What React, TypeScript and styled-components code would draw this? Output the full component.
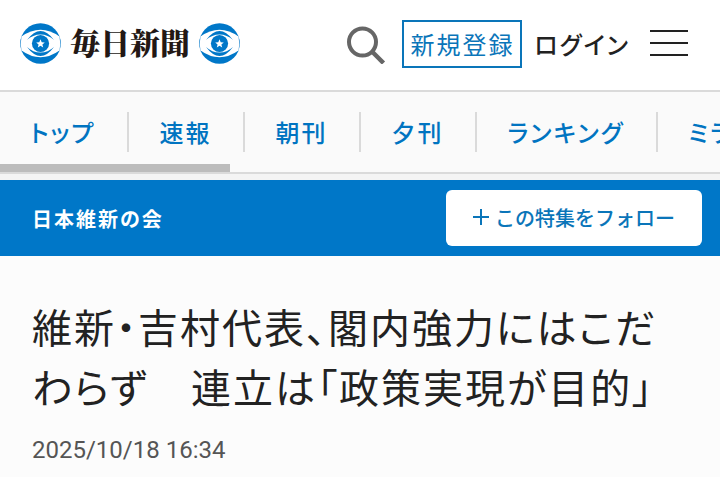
import React from "react";
import styled, { createGlobalStyle } from "styled-components";

const GlobalStyle = createGlobalStyle`
  *, *::before, *::after { box-sizing: border-box; }
  body {
    margin: 0;
    background: #fcfcfc;
    color: #222;
    font-family: "Noto Sans CJK JP", sans-serif;
    font-feature-settings: "palt";
    letter-spacing: 2px;
  }
  a { color: inherit; text-decoration: none; }
  button { font: inherit; border: 0; padding: 0; background: none; color: inherit; cursor: pointer; }
`;

const Header = styled.header`
  display: flex;
  align-items: center;
  height: 92px;
  padding: 0 32px 2px 20px;
  background: #fff;
  border-bottom: 2px solid #dadada;
`;

const Logo = styled.a`
  display: flex;
  align-items: center;
  gap: 9px;
  margin-right: auto;
`;

const LogoText = styled.span`
  padding-bottom: 6px;
  font-family: "Noto Serif CJK JP", "Noto Sans CJK JP", serif;
  font-size: 30px;
  line-height: 40px;
  font-weight: 900;
  letter-spacing: 0;
  font-feature-settings: normal;
  color: #231815;
  white-space: nowrap;
`;

const Tools = styled.div`
  display: flex;
  align-items: center;
`;

const IconButton = styled.button`
  display: flex;
`;

const SignUp = styled.a`
  margin: 0 12px 0 16px;
  padding: 0 6px;
  border: 2px solid #0a75b9;
  color: #0a75b9;
  font-size: 24px;
  line-height: 44px;
  white-space: nowrap;
`;

const Login = styled.a`
  margin-right: 20px;
  font-size: 24px;
  line-height: 44px;
  font-weight: 500;
  white-space: nowrap;
`;

const Nav = styled.nav`
  height: 82px;
  overflow: hidden;
  background: #fafafa;
  border-bottom: 2px solid #dadada;
`;

const NavList = styled.ul`
  display: flex;
  margin: 0;
  padding: 20px 0 12px;
  list-style: none;
`;

const NavItem = styled.li`
  flex: none;
  padding: 0 32px 0 30px;
  border-right: 2px solid #dadada;
  color: #0074c1;
  font-size: 24px;
  font-weight: 500;
  line-height: 40px;
`;

const ScrollThumb = styled.div`
  width: 32%;
  height: 8px;
  background: #bcbcbc;
`;

const Topic = styled.section`
  display: flex;
  align-items: center;
  justify-content: space-between;
  margin-top: 6px;
  padding: 10px 18px 10px 32px;
  background: #0077c8;
  color: #fff;
`;

const TopicName = styled.a`
  padding-top: 2px;
  font-size: 20px;
  line-height: 28px;
  font-weight: 700;
`;

const Follow = styled.button`
  display: flex;
  align-items: center;
  justify-content: center;
  gap: 4px;
  width: 256px;
  height: 56px;
  padding-bottom: 2px;
  border-radius: 6px;
  background: #fff;
  color: #0a75b9;
  font-family: Roboto, "Noto Sans CJK JP", sans-serif;
  font-size: 20px;
  font-weight: 500;
  letter-spacing: 0;
  font-feature-settings: normal;
`;

const Page = styled.div`
  background: #f4f4f4;
`;

const Article = styled.main`
  padding: 40px 32px 12px;
  background: #fcfcfc;
`;

const Title = styled.h1`
  margin: 0;
  font-size: 40px;
  line-height: 60px;
  font-weight: 400;
`;

const Published = styled.time`
  display: block;
  margin-top: 18px;
  color: #555;
  font-family: Roboto, "Noto Sans CJK JP", sans-serif;
  font-size: 24px;
  line-height: 32px;
  letter-spacing: 0;
`;

const EyeMark = () => (
  <svg width="41" height="42" viewBox="0 0 41 42" aria-hidden="true">
    <circle cx="20.500" cy="20.500" r="20.300" fill="#0077c8" />
    <path d="M1.500 13.500Q20.500 0 39.500 13.500Q41 20.500 39.500 27.500Q20.500 41 1.500 27.500Q0 20.500 1.500 13.500Z" fill="#fff" />
    <path d="M7 17Q20.500 -1 34 17Q28 11.500 20.500 11.500T7 17ZM7 24Q20.500 42 34 24Q28 29.500 20.500 29.500T7 24Z" fill="#0077c8" />
    <circle cx="20.500" cy="20.500" r="8.600" fill="#0077c8" />
    <path d="M20.500 16.300l1.200 2.900 3.100.2-2.400 2 .8 3-2.700-1.600-2.700 1.600.8-3-2.400-2 3.100-.2z" fill="#fff" />
  </svg>
);

const SearchIcon = () => (
  <svg width="40" height="40" viewBox="0 0 40 40" fill="none" stroke="#666" aria-hidden="true">
    <circle cx="16.500" cy="18" r="13.500" strokeWidth="4" />
    <path d="M26 27.500L37.500 39" strokeWidth="4.500" />
  </svg>
);

const MenuIcon = () => (
  <svg width="38" height="28" viewBox="0 0 38 28" fill="#222" aria-hidden="true">
    <rect width="38" height="2" />
    <rect y="12" width="38" height="2" />
    <rect y="24" width="38" height="2" />
  </svg>
);

const PlusIcon = () => (
  <svg width="18" height="18" viewBox="0 0 18 18" stroke="#0a75b9" strokeWidth="2" aria-hidden="true">
    <path d="M8 1V17M0 9H16" />
  </svg>
);

const sections = ["トップ", "速報", "朝刊", "夕刊", "ランキング", "ミライ"];

export default function App() {
  return (
    <Page lang="ja">
      <GlobalStyle />
      <Header>
        <Logo href="#">
          <EyeMark />
          <LogoText>毎日新聞</LogoText>
          <EyeMark />
        </Logo>
        <Tools>
          <IconButton type="button" aria-label="検索"><SearchIcon /></IconButton>
          <SignUp href="#">新規登録</SignUp>
          <Login href="#">ログイン</Login>
          <IconButton type="button" aria-label="メニュー"><MenuIcon /></IconButton>
        </Tools>
      </Header>
      <Nav>
        <NavList>
          {sections.map((name) => (
            <NavItem key={name}><a href="#">{name}</a></NavItem>
          ))}
        </NavList>
        <ScrollThumb />
      </Nav>
      <Topic>
        <TopicName href="#">日本維新の会</TopicName>
        <Follow type="button"><PlusIcon />この特集をフォロー</Follow>
      </Topic>
      <Article>
        <Title>維新・吉村代表、閣内強力にはこだわらず　連立は「政策実現が目的」</Title>
        <Published dateTime="2025-10-18T16:34">2025/10/18 16:34</Published>
      </Article>
    </Page>
  );
}
